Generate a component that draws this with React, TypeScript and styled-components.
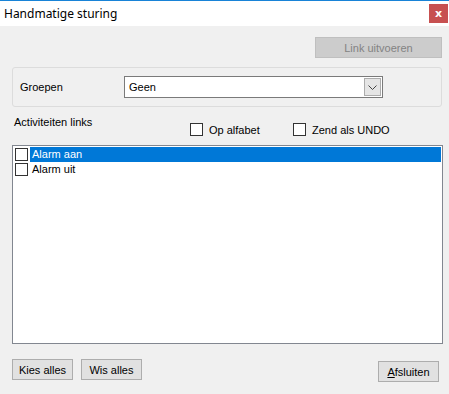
import React from 'react';
import styled, { createGlobalStyle } from 'styled-components';

const GlobalStyle = createGlobalStyle`
  html, body {
    margin: 0;
    padding: 0;
    background: #f0f0f0;
  }
  body {
    font-family: "Liberation Sans", Arial, sans-serif;
    font-size: 11px;
    color: #000;
  }
`;

const activities = [
  { label: 'Alarm aan', selected: true },
  { label: 'Alarm uit', selected: false },
];

const App = () => {
  return (
    <>
      <GlobalStyle />
      <Window>
        <TitleBar>
          <Title>Handmatige sturing</Title>
          <CloseButton>x</CloseButton>
        </TitleBar>
        <Body>
          <TopRow>
            <Button disabled width={127}>
              Link uitvoeren
            </Button>
          </TopRow>
          <GroupBox>
            <GroupLabel>Groepen</GroupLabel>
            <Combo>
              <ComboText>Geen</ComboText>
              <ComboArrow>
                <svg width="9" height="5" viewBox="0 0 9 5">
                  <path d="M0.5 0.5 L4.5 4.5 L8.5 0.5" fill="none" stroke="#444" strokeWidth="1" />
                </svg>
              </ComboArrow>
            </Combo>
          </GroupBox>
          <OptionsRow>
            <SectionLabel>Activiteiten links</SectionLabel>
            <CheckOption width={103}>
              <CheckBox />
              Op alfabet
            </CheckOption>
            <CheckOption>
              <CheckBox />
              Zend als UNDO
            </CheckOption>
          </OptionsRow>
          <ListBox>
            {activities.map((a) => (
              <ListRow key={a.label}>
                <CheckBox />
                <RowText selected={a.selected}>{a.label}</RowText>
              </ListRow>
            ))}
          </ListBox>
          <BottomRow>
            <Button width={61}>Kies alles</Button>
            <Button width={61}>Wis alles</Button>
            <Spacer />
            <Button width={61} low>
              <u>A</u>fsluiten
            </Button>
          </BottomRow>
        </Body>
      </Window>
    </>
  );
};

const Window = styled.div`
  display: flex;
  flex-direction: column;
  width: 449px;
  height: 394px;
  border-top: 1px solid #1883d7;
  box-sizing: border-box;
  background: #f0f0f0;
  overflow: hidden;
`;

const TitleBar = styled.div`
  display: flex;
  align-items: center;
  justify-content: space-between;
  height: 25px;
  background: #fff;
  padding: 0 1px 0 4px;
`;

const Title = styled.span`
  font-family: "Noto Sans", "Open Sans", sans-serif;
  font-size: 12px;
  color: #000;
`;

const CloseButton = styled.div`
  display: flex;
  align-items: center;
  justify-content: center;
  width: 19px;
  height: 19px;
  background: #c75050;
  color: #fff;
  font-family: "DejaVu Sans", sans-serif;
  font-weight: bold;
  font-size: 11px;
  line-height: 1;
`;

const Body = styled.div`
  display: flex;
  flex-direction: column;
  flex: 1;
  padding: 0 6px 0 12px;
`;

const TopRow = styled.div`
  display: flex;
  justify-content: flex-end;
  margin-top: 11px;
  padding-right: 1px;
`;

const Button = styled.button<{ width: number; low?: boolean }>`
  width: ${(p) => p.width}px;
  height: 21px;
  margin-top: ${(p) => (p.low ? '2px' : '0')};
  padding: 0;
  font-family: "Liberation Sans", Arial, sans-serif;
  font-size: 11px;
  color: #000;
  background: #e1e1e1;
  border: 1px solid #adadad;
  border-radius: 0;
  &:disabled {
    background: #cccccc;
    border-color: #bfbfbf;
    color: #838383;
  }
`;

const GroupBox = styled.div`
  display: flex;
  align-items: center;
  height: 40px;
  box-sizing: border-box;
  margin-top: 9px;
  margin-right: 1px;
  padding-left: 7px;
  border: 1px solid #dcdcdc;
  border-radius: 3px;
`;

const GroupLabel = styled.span`
  width: 104px;
`;

const Combo = styled.div`
  display: flex;
  align-items: center;
  justify-content: space-between;
  width: 259px;
  height: 22px;
  box-sizing: border-box;
  background: #fff;
  border: 1px solid #7a7a7a;
  padding: 0 1px 0 4px;
`;

const ComboText = styled.span`
  font-size: 11px;
`;

const ComboArrow = styled.div`
  display: flex;
  align-items: center;
  justify-content: center;
  width: 17px;
  height: 18px;
  box-sizing: border-box;
  background: #e5e5e5;
  border: 1px solid #acacac;
`;

const OptionsRow = styled.div`
  display: flex;
  align-items: flex-start;
  height: 38px;
  padding-left: 2px;
`;

const SectionLabel = styled.span`
  width: 176px;
  margin-top: 9px;
`;

const CheckOption = styled.label<{ width?: number }>`
  display: flex;
  align-items: center;
  gap: 6px;
  width: ${(p) => (p.width ? `${p.width}px` : 'auto')};
  margin-top: 16px;
`;

const CheckBox = styled.span`
  display: inline-block;
  width: 13px;
  height: 13px;
  box-sizing: border-box;
  border: 1px solid #333;
  background: #fff;
  flex-shrink: 0;
`;

const ListBox = styled.div`
  display: flex;
  flex-direction: column;
  height: 199px;
  box-sizing: border-box;
  border: 1px solid #828790;
  background: #fff;
  padding: 1px 1px 0 2px;
`;

const ListRow = styled.div`
  display: flex;
  align-items: center;
  height: 15px;
  gap: 2px;
`;

const RowText = styled.span<{ selected?: boolean }>`
  flex: 1;
  height: 15px;
  line-height: 15px;
  padding-left: 2px;
  background: ${(p) => (p.selected ? '#0078d7' : 'transparent')};
  color: ${(p) => (p.selected ? '#fff' : '#000')};
`;

const BottomRow = styled.div`
  display: flex;
  align-items: flex-start;
  gap: 8px;
  margin-top: 15px;
  padding-right: 4px;
`;

const Spacer = styled.div`
  flex: 1;
`;

export default App;
